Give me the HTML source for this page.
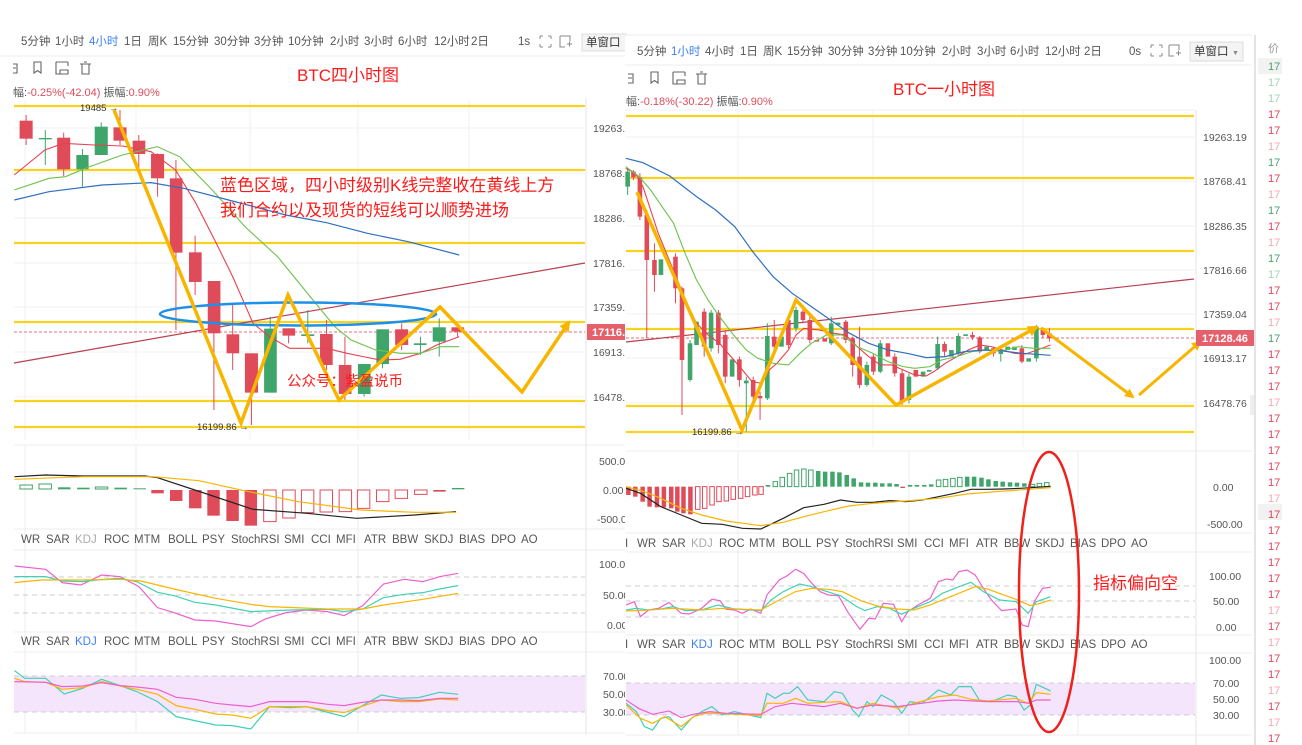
<!DOCTYPE html>
<html><head><meta charset="utf-8"><style>
html,body{margin:0;padding:0;background:#fff;width:1302px;height:745px;overflow:hidden}
svg{display:block;font-family:"Liberation Sans","Noto Sans CJK SC",sans-serif}
.t{font-size:11.5px;fill:#333}
.ax{font-size:10.5px;fill:#555}
.tab{font-size:11.5px;fill:#555}
.ns{vector-effect:non-scaling-stroke;fill:none}
</style></head><body>
<svg width="1302" height="745" viewBox="0 0 1302 745">
<defs>
<marker id="ah" viewBox="0 0 10 10" refX="8" refY="5" markerWidth="3.2" markerHeight="3.2" orient="auto"><path d="M0,0L10,5L0,10z" fill="#f8b500"/></marker>
</defs>
<rect width="1302" height="745" fill="#fff"/>

<!-- ============ LEFT PANEL ============ -->
<g class="tab">
<text x="21" y="45">5分钟</text><text x="55" y="45">1小时</text><text x="89" y="45" fill="#3b82f6">4小时</text><text x="124" y="45">1日</text><text x="148" y="45">周K</text><text x="173" y="45">15分钟</text><text x="214" y="45">30分钟</text><text x="254" y="45">3分钟</text><text x="288" y="45">10分钟</text><text x="330" y="45">2小时</text><text x="364" y="45">3小时</text><text x="398" y="45">6小时</text><text x="434" y="45">12小时</text><text x="471" y="45">2日</text><text x="518" y="45">1s</text>
</g>
<g stroke="#888" fill="none" stroke-width="1"><path d="M540 36h3M540 36v3M551 36h-3M551 36v3M540 47h3M540 47v-3M551 47h-3M551 47v-3"/><path d="M560 36h10v5M560 36v11h5M567 44h5M569.5 41.5v5"/></g>
<rect x="582" y="34" width="44" height="17" fill="#f4f4f4" stroke="#ddd"/><text x="586" y="46" class="t" font-size="11">单窗口</text>
<line x1="0" y1="56" x2="625" y2="56" stroke="#eee"/>
<g stroke="#666" fill="none" stroke-width="1.1"><path d="M13 64h4v9h-4M13 68h3"/><path d="M34 62h7v11l-3.5-2.5L34 73z"/><path d="M56 62h12M56 62v12h5M68 62v4M60 70h8v4h-8z"/><path d="M80 64h11M82 64v10h7V64M84 62h3"/></g>
<text x="297" y="81" font-size="17" fill="#ff1a1a">BTC四小时图</text>
<text x="13" y="96" font-size="11" fill="#e04b5a"><tspan fill="#555">幅:</tspan>-0.25%(-42.04) <tspan fill="#555">振幅:</tspan>0.90%</text>
<g stroke="#f0f0f0"><line x1="25" y1="100" x2="25" y2="440"/><line x1="136" y1="100" x2="136" y2="440"/><line x1="250" y1="100" x2="250" y2="440"/><line x1="358" y1="100" x2="358" y2="440"/><line x1="469" y1="100" x2="469" y2="440"/>
<line x1="14" y1="128" x2="585" y2="128"/><line x1="14" y1="173" x2="585" y2="173"/><line x1="14" y1="218" x2="585" y2="218"/><line x1="14" y1="263" x2="585" y2="263"/><line x1="14" y1="307" x2="585" y2="307"/><line x1="14" y1="352" x2="585" y2="352"/><line x1="14" y1="397" x2="585" y2="397"/></g>
<line x1="586" y1="98" x2="586" y2="735" stroke="#e6e6e6"/>
<g stroke="#f7d320" stroke-width="2.2"><line x1="14" y1="106" x2="585" y2="106"/><line x1="14" y1="170" x2="585" y2="170"/><line x1="14" y1="243" x2="585" y2="243"/><line x1="14" y1="322" x2="585" y2="322"/><line x1="14" y1="401" x2="585" y2="401"/><line x1="14" y1="427" x2="585" y2="427"/></g>
<line x1="14" y1="332" x2="585" y2="332" stroke="#e8707a" stroke-dasharray="3,2"/>
<line x1="14" y1="363" x2="585" y2="263" stroke="#b8424f" stroke-width="1.2"/>
<g transform="translate(0,90) scale(0.4082,0.3333)">
<g stroke-width="1" class="ns">
<g stroke="#e04b5a"><line x1="64" y1="75" x2="64" y2="165" class="ns"/><line x1="156" y1="128" x2="156" y2="258" class="ns"/><line x1="294" y1="60" x2="294" y2="165" class="ns"/><line x1="340" y1="135" x2="340" y2="235" class="ns"/><line x1="386" y1="190" x2="386" y2="320" class="ns"/><line x1="431" y1="210" x2="431" y2="720" class="ns"/><line x1="478" y1="437" x2="478" y2="615" class="ns"/><line x1="524" y1="573" x2="524" y2="960" class="ns"/><line x1="570" y1="640" x2="570" y2="840" class="ns"/><line x1="616" y1="790" x2="616" y2="1005" class="ns"/><line x1="707" y1="715" x2="707" y2="760" class="ns"/><line x1="800" y1="690" x2="800" y2="840" class="ns"/><line x1="845" y1="740" x2="845" y2="930" class="ns"/><line x1="984" y1="700" x2="984" y2="780" class="ns"/><line x1="1121" y1="712" x2="1121" y2="740" class="ns"/></g>
<g stroke="#3fa56b"><line x1="111" y1="120" x2="111" y2="225" class="ns"/><line x1="202" y1="177" x2="202" y2="290" class="ns"/><line x1="248" y1="97" x2="248" y2="195" class="ns"/><line x1="662" y1="680" x2="662" y2="908" class="ns"/><line x1="754" y1="660" x2="754" y2="760" class="ns"/><line x1="892" y1="822" x2="892" y2="920" class="ns"/><line x1="937" y1="718" x2="937" y2="835" class="ns"/><line x1="1030" y1="740" x2="1030" y2="795" class="ns"/><line x1="1076" y1="685" x2="1076" y2="800" class="ns"/></g>
</g>
<g fill="#e04b5a"><rect x="48" y="92" width="32" height="54"/><rect x="140" y="143" width="32" height="95"/><rect x="278" y="112" width="32" height="40"/><rect x="325" y="152" width="31" height="40"/><rect x="370" y="192" width="32" height="73"/><rect x="416" y="265" width="31" height="223"/><rect x="463" y="487" width="31" height="89"/><rect x="509" y="573" width="31" height="157"/><rect x="555" y="733" width="31" height="57"/><rect x="600" y="790" width="32" height="118"/><rect x="692" y="715" width="31" height="22"/><rect x="784" y="732" width="31" height="93"/><rect x="830" y="825" width="31" height="87"/><rect x="968" y="718" width="32" height="47"/><rect x="1106" y="712" width="31" height="13"/></g>
<g fill="#3fa56b"><rect x="95" y="144" width="32" height="4"/><rect x="187" y="195" width="30" height="43"/><rect x="232" y="110" width="32" height="85"/><rect x="647" y="716" width="31" height="192"/><rect x="738" y="733" width="32" height="5"/><rect x="877" y="822" width="31" height="90"/><rect x="922" y="718" width="31" height="104"/><rect x="1014" y="760" width="31" height="5"/><rect x="1060" y="712" width="32" height="43"/></g>
<polyline class="ns" stroke="#e8404e" stroke-width="1.1" points="35,255 110,180 155,160 230,165 300,168 370,185 430,240 480,340 530,460 570,560 620,700 660,740 710,775 760,775 800,775 850,790 890,800 930,810 980,808 1030,790 1070,765 1125,740"/>
<polyline class="ns" stroke="#6cc24a" stroke-width="1.1" points="35,300 120,265 160,260 220,230 300,195 385,170 440,200 520,300 600,410 680,500 760,620 820,710 860,750 920,780 980,790 1030,790 1080,770 1125,770"/>
<polyline class="ns" stroke="#2f6fc0" stroke-width="1.2" points="35,330 120,305 250,285 370,278 450,295 560,330 700,375 800,398 900,430 1000,455 1125,495"/>
</g>
<text x="80" y="111" font-size="9.5" fill="#333">19485 →</text>
<text x="197" y="430" font-size="9.5" fill="#333">16199.86 →</text>
<ellipse cx="298" cy="314" rx="138" ry="11.5" fill="none" stroke="#1e90e8" stroke-width="2.5"/>
<polyline points="114,110 241,423 288,295 339,400 440,307 522,392 569,322" fill="none" stroke="#f8b500" stroke-width="3.5" stroke-linejoin="miter" marker-end="url(#ah)"/>
<text x="220" y="191" font-size="17" fill="#ff1a1a">蓝色区域，四小时级别K线完整收在黄线上方</text>
<text x="220" y="216" font-size="17" fill="#ff1a1a">我们合约以及现货的短线可以顺势进场</text>
<text x="287" y="386" font-size="14.5" fill="#ff1a1a">公众号：紫盈说币</text>
<g class="ax"><text x="593" y="132">19263.1</text><text x="593" y="177">18768.4</text><text x="593" y="222">18286.3</text><text x="593" y="267">17816.6</text><text x="593" y="311">17359.0</text><text x="593" y="356">16913.1</text><text x="593" y="401">16478.7</text></g>
<rect x="587" y="324" width="38" height="16" fill="#e5606b"/><text x="592" y="336" font-size="11" fill="#fff" font-weight="bold">17116.0</text>

<g stroke="#ececec"><line x1="14" y1="445" x2="625" y2="445"/><line x1="14" y1="529" x2="625" y2="529"/><line x1="14" y1="550" x2="625" y2="550"/><line x1="14" y1="632" x2="625" y2="632"/><line x1="14" y1="652" x2="625" y2="652"/><line x1="14" y1="733" x2="625" y2="733"/><line x1="136" y1="445" x2="136" y2="733"/><line x1="358" y1="445" x2="358" y2="733"/><line x1="25" y1="445" x2="25" y2="733"/></g>
<rect x="14" y="676" width="571" height="36" fill="#f4e5fd"/>
<g stroke="#ccc" stroke-dasharray="5,4"><line x1="14" y1="577" x2="585" y2="577"/><line x1="14" y1="595" x2="585" y2="595"/><line x1="14" y1="613" x2="585" y2="613"/><line x1="14" y1="676" x2="585" y2="676"/><line x1="14" y1="712" x2="585" y2="712"/></g>
<g transform="translate(0,440) scale(0.4146,0.3333)">
<g fill="none" stroke="#3fa56b"><rect x="48" y="135" width="30" height="12" class="ns"/><rect x="94" y="132" width="30" height="15" class="ns"/><rect x="230" y="141" width="30" height="6" class="ns"/></g>
<g fill="#3fa56b"><rect x="140" y="142" width="30" height="6"/><rect x="186" y="143" width="30" height="5"/><rect x="276" y="143" width="30" height="5"/><rect x="322" y="145" width="30" height="3"/><rect x="1090" y="144" width="30" height="4"/></g>
<g fill="#e04b5a"><rect x="365" y="150" width="30" height="10"/><rect x="410" y="150" width="30" height="33"/><rect x="456" y="150" width="30" height="55"/><rect x="500" y="150" width="30" height="77"/><rect x="546" y="150" width="30" height="93"/><rect x="590" y="150" width="30" height="107"/><rect x="1045" y="150" width="30" height="5"/></g>
<g fill="none" stroke="#e04b5a"><rect x="636" y="150" width="30" height="95" class="ns"/><rect x="682" y="150" width="30" height="84" class="ns"/><rect x="727" y="150" width="30" height="68" class="ns"/><rect x="772" y="150" width="30" height="66" class="ns"/><rect x="818" y="150" width="30" height="65" class="ns"/><rect x="862" y="150" width="30" height="55" class="ns"/><rect x="908" y="150" width="30" height="35" class="ns"/><rect x="953" y="150" width="30" height="25" class="ns"/><rect x="1000" y="150" width="30" height="13" class="ns"/></g>
<polyline class="ns" stroke="#222" stroke-width="1.2" points="35,110 110,105 200,108 350,108 380,113 470,150 610,208 740,220 860,235 1000,225 1100,215"/>
<polyline class="ns" stroke="#f8b500" stroke-width="1.2" points="35,118 200,110 370,110 480,122 600,155 720,185 870,210 1000,217 1100,217"/>
<polyline class="ns" stroke="#ee5fcf" stroke-width="1.2" points="35,378 110,388 150,428 195,435 245,405 290,410 335,440 380,503 420,518 470,540 520,543 605,560 640,537 690,518 740,510 790,515 830,527 875,497 925,432 975,418 1020,425 1060,410 1105,400"/>
<polyline class="ns" stroke="#3fd1b5" stroke-width="1.2" points="35,410 110,410 150,423 200,425 250,418 290,415 330,425 380,457 420,467 470,487 520,495 605,515 700,510 790,508 830,515 875,507 925,473 975,463 1020,458 1060,447 1105,437"/>
<polyline class="ns" stroke="#f8b500" stroke-width="1.2" points="35,428 100,420 200,420 290,418 340,423 380,435 430,450 520,475 605,493 650,500 790,507 875,507 925,495 1020,478 1105,460"/>
<polyline class="ns" stroke="#3fd1b5" stroke-width="1.2" points="35,692 60,715 110,715 155,762 200,745 245,718 290,737 330,755 380,785 425,830 470,842 520,855 560,857 605,867 650,800 700,803 740,800 790,817 830,830 870,800 920,765 965,775 1010,773 1060,757 1105,763"/>
<polyline class="ns" stroke="#f8b500" stroke-width="1.2" points="35,715 60,725 110,727 150,748 200,743 245,725 290,738 330,748 380,763 425,797 470,808 520,822 560,825 605,835 650,800 700,800 740,800 790,812 830,818 870,800 920,780 965,785 1010,785 1060,777 1105,780"/>
<polyline class="ns" stroke="#ee5fcf" stroke-width="1.2" points="35,725 110,727 150,740 200,738 245,728 290,737 330,741 380,748 425,772 470,778 520,790 560,795 605,800 650,785 700,785 740,785 790,793 830,797 870,788 920,780 965,780 1010,782 1060,775 1105,775"/>
</g>
<g class="tab"><text x="21" y="543">WR</text><text x="46" y="543">SAR</text><text x="75" y="543" fill="#aaa">KDJ</text><text x="104" y="543">ROC</text><text x="134" y="543">MTM</text><text x="168" y="543">BOLL</text><text x="202" y="543">PSY</text><text x="231" y="543">StochRSI</text><text x="284" y="543">SMI</text><text x="311" y="543">CCI</text><text x="336" y="543">MFI</text><text x="364" y="543">ATR</text><text x="392" y="543">BBW</text><text x="424" y="543">SKDJ</text><text x="459" y="543">BIAS</text><text x="491" y="543">DPO</text><text x="521" y="543">AO</text></g>
<g class="tab"><text x="21" y="645">WR</text><text x="46" y="645">SAR</text><text x="75" y="645" fill="#3b82f6">KDJ</text><text x="104" y="645">ROC</text><text x="134" y="645">MTM</text><text x="168" y="645">BOLL</text><text x="202" y="645">PSY</text><text x="231" y="645">StochRSI</text><text x="284" y="645">SMI</text><text x="311" y="645">CCI</text><text x="336" y="645">MFI</text><text x="364" y="645">ATR</text><text x="392" y="645">BBW</text><text x="424" y="645">SKDJ</text><text x="459" y="645">BIAS</text><text x="491" y="645">DPO</text><text x="521" y="645">AO</text></g>
<g class="ax"><text x="599" y="465">500.00</text><text x="603" y="494">0.00</text><text x="597" y="523">-500.0</text><text x="599" y="568">100.00</text><text x="603" y="599">50.00</text><text x="607" y="629">0.00</text><text x="603" y="680">70.00</text><text x="603" y="698">50.00</text><text x="603" y="716">30.00</text></g>

<!-- ============ RIGHT PANEL ============ -->
<rect x="625" y="35" width="677" height="710" fill="#fff"/>
<line x1="625" y1="35" x2="1252" y2="35" stroke="#eee"/>
<g class="tab">
<text x="637" y="55">5分钟</text><text x="671" y="55" fill="#3b82f6">1小时</text><text x="705" y="55">4小时</text><text x="740" y="55">1日</text><text x="763" y="55">周K</text><text x="787" y="55">15分钟</text><text x="828" y="55">30分钟</text><text x="868" y="55">3分钟</text><text x="900" y="55">10分钟</text><text x="942" y="55">2小时</text><text x="977" y="55">3小时</text><text x="1010" y="55">6小时</text><text x="1045" y="55">12小时</text><text x="1084" y="55">2日</text><text x="1129" y="55">0s</text>
</g>
<g stroke="#888" fill="none" stroke-width="1"><path d="M1151 45h3M1151 45v3M1162 45h-3M1162 45v3M1151 56h3M1151 56v-3M1162 56h-3M1162 56v-3"/><path d="M1169 45h10v5M1169 45v11h5M1176 53h5M1178.5 50.5v5"/></g>
<rect x="1190" y="42" width="53" height="19" fill="#f4f4f4" stroke="#ddd"/><text x="1194" y="55" class="t" font-size="11">单窗口</text><text x="1232" y="55" font-size="7" fill="#888">▼</text>
<line x1="625" y1="65" x2="1252" y2="65" stroke="#eee"/>
<g stroke="#666" fill="none" stroke-width="1.1"><path d="M628 74h5v9h-5M628 78h4"/><path d="M651 72h7v11l-3.5-2.5L651 83z"/><path d="M673 72h12M673 72v12h5M685 72v4M677 80h8v4h-8z"/><path d="M696 74h11M698 74v10h7V74M700 72h3"/></g>
<text x="893" y="95" font-size="17" fill="#ff1a1a">BTC一小时图</text>
<text x="626" y="105" font-size="11" fill="#e04b5a"><tspan fill="#555">幅:</tspan>-0.18%(-30.22) <tspan fill="#555">振幅:</tspan>0.90%</text>
<line x1="625" y1="110" x2="1195" y2="110" stroke="#f0f0f0"/>
<g stroke="#f2f2f2"><line x1="738" y1="110" x2="738" y2="447"/><line x1="873" y1="110" x2="873" y2="447"/><line x1="1023" y1="110" x2="1023" y2="447"/>
<line x1="626" y1="137" x2="1195" y2="137"/><line x1="626" y1="181" x2="1195" y2="181"/><line x1="626" y1="226" x2="1195" y2="226"/><line x1="626" y1="270" x2="1195" y2="270"/><line x1="626" y1="314" x2="1195" y2="314"/><line x1="626" y1="358" x2="1195" y2="358"/><line x1="626" y1="403" x2="1195" y2="403"/></g>
<line x1="1196" y1="110" x2="1196" y2="745" stroke="#e6e6e6"/>
<g stroke="#f7d320" stroke-width="2.2"><line x1="626" y1="116" x2="1194" y2="116"/><line x1="626" y1="178" x2="1194" y2="178"/><line x1="626" y1="251" x2="1194" y2="251"/><line x1="626" y1="329" x2="1194" y2="329"/><line x1="626" y1="406" x2="1194" y2="406"/><line x1="626" y1="432" x2="1194" y2="432"/></g>
<line x1="626" y1="338" x2="1196" y2="338" stroke="#e8707a" stroke-dasharray="3,2"/>
<line x1="626" y1="342" x2="1194" y2="279" stroke="#b8424f" stroke-width="1.2"/>
<g transform="translate(620,90) scale(0.3827,0.3333)">
<g class="ns" stroke-width="1">
<g stroke="#e04b5a"><line x1="35" y1="240" x2="35" y2="270" class="ns"/><line x1="52" y1="250" x2="52" y2="390" class="ns"/><line x1="70" y1="360" x2="70" y2="745" class="ns"/><line x1="90" y1="460" x2="90" y2="605" class="ns"/><line x1="145" y1="490" x2="145" y2="640" class="ns"/><line x1="162" y1="590" x2="162" y2="975" class="ns"/><line x1="220" y1="655" x2="220" y2="800" class="ns"/><line x1="257" y1="660" x2="257" y2="790" class="ns"/><line x1="275" y1="720" x2="275" y2="880" class="ns"/><line x1="312" y1="800" x2="312" y2="890" class="ns"/><line x1="348" y1="860" x2="348" y2="935" class="ns"/><line x1="366" y1="905" x2="366" y2="990" class="ns"/><line x1="403" y1="690" x2="403" y2="780" class="ns"/><line x1="440" y1="680" x2="440" y2="775" class="ns"/><line x1="478" y1="650" x2="478" y2="700" class="ns"/><line x1="496" y1="680" x2="496" y2="760" class="ns"/><line x1="590" y1="690" x2="590" y2="760" class="ns"/><line x1="608" y1="740" x2="608" y2="860" class="ns"/><line x1="626" y1="710" x2="626" y2="895" class="ns"/><line x1="662" y1="790" x2="662" y2="855" class="ns"/><line x1="718" y1="790" x2="718" y2="860" class="ns"/><line x1="737" y1="840" x2="737" y2="945" class="ns"/><line x1="848" y1="755" x2="848" y2="800" class="ns"/><line x1="921" y1="725" x2="921" y2="750" class="ns"/><line x1="940" y1="738" x2="940" y2="790" class="ns"/><line x1="976" y1="770" x2="976" y2="800" class="ns"/><line x1="1050" y1="765" x2="1050" y2="820" class="ns"/><line x1="1105" y1="712" x2="1105" y2="745" class="ns"/><line x1="1122" y1="715" x2="1122" y2="755" class="ns"/></g>
<g stroke="#3fa56b"><line x1="20" y1="235" x2="20" y2="315" class="ns"/><line x1="183" y1="750" x2="183" y2="875" class="ns"/><line x1="238" y1="660" x2="238" y2="785" class="ns"/><line x1="330" y1="860" x2="330" y2="1025" class="ns"/><line x1="385" y1="700" x2="385" y2="930" class="ns"/><line x1="460" y1="650" x2="460" y2="725" class="ns"/><line x1="552" y1="680" x2="552" y2="765" class="ns"/><line x1="645" y1="815" x2="645" y2="890" class="ns"/><line x1="680" y1="750" x2="680" y2="850" class="ns"/><line x1="755" y1="850" x2="755" y2="940" class="ns"/><line x1="830" y1="740" x2="830" y2="840" class="ns"/><line x1="884" y1="730" x2="884" y2="795" class="ns"/><line x1="995" y1="775" x2="995" y2="815" class="ns"/><line x1="1088" y1="705" x2="1088" y2="815" class="ns"/></g>
</g>
<g fill="#e04b5a"><rect x="29" y="245" width="12" height="17"/><rect x="46" y="262" width="12" height="118"/><rect x="64" y="375" width="12" height="135"/><rect x="84" y="510" width="12" height="45"/><rect x="139" y="500" width="12" height="95"/><rect x="156" y="595" width="12" height="215"/><rect x="214" y="665" width="12" height="105"/><rect x="251" y="668" width="12" height="97"/><rect x="269" y="735" width="12" height="125"/><rect x="306" y="808" width="12" height="62"/><rect x="342" y="870" width="12" height="50"/><rect x="360" y="918" width="12" height="7"/><rect x="397" y="740" width="12" height="30"/><rect x="434" y="690" width="12" height="75"/><rect x="472" y="665" width="12" height="25"/><rect x="490" y="690" width="12" height="60"/><rect x="508" y="750" width="12" height="5"/><rect x="529" y="745" width="12" height="10"/><rect x="584" y="695" width="12" height="55"/><rect x="602" y="745" width="12" height="80"/><rect x="620" y="800" width="12" height="85"/><rect x="656" y="800" width="12" height="45"/><rect x="694" y="760" width="12" height="40"/><rect x="712" y="800" width="12" height="50"/><rect x="731" y="850" width="12" height="85"/><rect x="767" y="840" width="12" height="20"/><rect x="842" y="762" width="12" height="23"/><rect x="915" y="735" width="12" height="7"/><rect x="934" y="742" width="12" height="43"/><rect x="970" y="775" width="12" height="15"/><rect x="1044" y="775" width="12" height="40"/><rect x="1099" y="720" width="12" height="15"/><rect x="1116" y="730" width="12" height="15"/></g>
<g fill="#3fa56b"><rect x="14" y="245" width="12" height="45"/><rect x="101" y="508" width="12" height="47"/><rect x="177" y="760" width="12" height="110"/><rect x="194" y="695" width="12" height="70"/><rect x="232" y="668" width="12" height="107"/><rect x="287" y="808" width="12" height="52"/><rect x="324" y="872" width="12" height="8"/><rect x="379" y="738" width="12" height="187"/><rect x="416" y="740" width="12" height="30"/><rect x="454" y="660" width="12" height="55"/><rect x="546" y="700" width="12" height="60"/><rect x="564" y="698" width="12" height="7"/><rect x="639" y="825" width="12" height="60"/><rect x="674" y="760" width="12" height="85"/><rect x="749" y="860" width="12" height="70"/><rect x="786" y="845" width="12" height="15"/><rect x="802" y="840" width="12" height="5"/><rect x="824" y="762" width="12" height="73"/><rect x="860" y="780" width="12" height="20"/><rect x="878" y="738" width="12" height="52"/><rect x="897" y="733" width="12" height="5"/><rect x="952" y="770" width="12" height="10"/><rect x="989" y="785" width="12" height="7"/><rect x="1007" y="770" width="12" height="10"/><rect x="1025" y="770" width="12" height="10"/><rect x="1062" y="805" width="12" height="10"/><rect x="1082" y="712" width="12" height="93"/></g>
<polyline class="ns" stroke="#e8404e" stroke-width="1.1" points="15,235 40,250 60,290 80,360 100,430 125,500 150,570 175,640 200,700 230,735 260,760 290,800 320,840 345,875 370,880 390,840 410,820 440,780 460,735 480,715 520,720 560,730 590,735 620,770 650,800 680,825 710,825 740,840 770,855 800,858 820,845 850,820 880,800 910,780 940,765 970,770 1000,780 1030,790 1060,792 1090,780 1125,765"/>
<polyline class="ns" stroke="#6cc24a" stroke-width="1.1" points="15,230 50,260 80,300 110,350 140,400 170,490 200,570 230,630 260,680 300,740 330,780 360,805 400,820 440,825 470,790 500,760 540,735 580,735 620,770 660,790 700,815 740,830 770,835 810,830 840,810 880,800 920,785 960,780 1000,782 1040,770 1080,775 1125,775"/>
<polyline class="ns" stroke="#2f6fc0" stroke-width="1.2" points="15,205 60,218 130,258 200,320 250,360 300,410 350,490 400,560 450,610 500,650 550,690 600,730 650,760 700,780 750,790 800,803 850,800 900,785 950,780 1000,783 1050,790 1125,796"/>
</g>
<text x="692" y="435" font-size="9.5" fill="#333">16199.86 →</text>
<polyline points="637,192 742,430 796,300 896,405 1037,327" fill="none" stroke="#f8b500" stroke-width="3.5" marker-end="url(#ah)"/>
<polyline points="1041,328 1133,397" fill="none" stroke="#f8b500" stroke-width="3" marker-end="url(#ah)"/>
<polyline points="1139,395 1200,342" fill="none" stroke="#f8b500" stroke-width="3" marker-end="url(#ah)"/>
<g class="ax"><text x="1203" y="141">19263.19</text><text x="1203" y="185">18768.41</text><text x="1203" y="230">18286.35</text><text x="1203" y="274">17816.66</text><text x="1203" y="318">17359.04</text><text x="1203" y="362">16913.17</text><text x="1203" y="407">16478.76</text></g>
<rect x="1196" y="330" width="59" height="16" fill="#e5606b"/><text x="1202" y="342" font-size="11" fill="#fff" font-weight="bold">17128.46</text>
<rect x="1250" y="395" width="5" height="20" fill="#eee"/>

<g stroke="#ececec"><line x1="626" y1="451" x2="1252" y2="451"/><line x1="626" y1="533" x2="1252" y2="533"/><line x1="626" y1="552" x2="1252" y2="552"/><line x1="626" y1="635" x2="1252" y2="635"/><line x1="626" y1="653" x2="1252" y2="653"/><line x1="626" y1="735" x2="1252" y2="735"/><line x1="738" y1="451" x2="738" y2="735"/><line x1="909" y1="451" x2="909" y2="735"/><line x1="1078" y1="451" x2="1078" y2="735"/></g>
<rect x="626" y="683" width="569" height="32" fill="#f4e5fd"/>
<g stroke="#ccc" stroke-dasharray="5,4"><line x1="626" y1="586" x2="1195" y2="586"/><line x1="626" y1="601" x2="1195" y2="601"/><line x1="626" y1="617" x2="1195" y2="617"/><line x1="626" y1="683" x2="1195" y2="683"/><line x1="626" y1="715" x2="1195" y2="715"/></g>
<g transform="translate(620,445) scale(0.4082,0.3333)">
<g fill="#e04b5a"><rect x="15" y="125" width="11" height="25"/><rect x="32" y="125" width="11" height="30"/><rect x="50" y="125" width="11" height="45"/><rect x="67" y="125" width="11" height="60"/><rect x="85" y="125" width="11" height="62"/><rect x="102" y="125" width="11" height="62"/><rect x="120" y="125" width="11" height="65"/><rect x="135" y="125" width="11" height="75"/><rect x="150" y="125" width="11" height="80"/><rect x="167" y="125" width="11" height="83"/><rect x="687" y="125" width="11" height="4"/></g>
<g fill="none" stroke="#e04b5a"><rect x="185" y="125" width="11" height="68" class="ns"/><rect x="202" y="125" width="11" height="65" class="ns"/><rect x="220" y="125" width="11" height="55" class="ns"/><rect x="237" y="125" width="11" height="45" class="ns"/><rect x="255" y="125" width="11" height="43" class="ns"/><rect x="272" y="125" width="11" height="38" class="ns"/><rect x="290" y="125" width="11" height="35" class="ns"/><rect x="307" y="125" width="11" height="30" class="ns"/><rect x="325" y="125" width="11" height="25" class="ns"/><rect x="340" y="125" width="11" height="23" class="ns"/></g>
<g fill="none" stroke="#3fa56b"><rect x="375" y="110" width="11" height="15" class="ns"/><rect x="392" y="97" width="11" height="28" class="ns"/><rect x="410" y="85" width="11" height="40" class="ns"/><rect x="427" y="75" width="11" height="50" class="ns"/><rect x="445" y="72" width="11" height="53" class="ns"/><rect x="462" y="75" width="11" height="50" class="ns"/><rect x="775" y="105" width="11" height="20" class="ns"/><rect x="792" y="103" width="11" height="22" class="ns"/><rect x="810" y="100" width="11" height="25" class="ns"/><rect x="827" y="97" width="11" height="28" class="ns"/><rect x="1005" y="118" width="11" height="7" class="ns"/><rect x="1022" y="115" width="11" height="10" class="ns"/><rect x="1040" y="113" width="11" height="12" class="ns"/></g>
<g fill="#3fa56b"><rect x="357" y="120" width="11" height="5"/><rect x="480" y="78" width="11" height="47"/><rect x="497" y="80" width="11" height="45"/><rect x="515" y="80" width="11" height="45"/><rect x="532" y="82" width="11" height="43"/><rect x="550" y="90" width="11" height="35"/><rect x="567" y="100" width="11" height="25"/><rect x="585" y="112" width="11" height="13"/><rect x="602" y="113" width="11" height="12"/><rect x="620" y="113" width="11" height="12"/><rect x="637" y="115" width="11" height="10"/><rect x="655" y="115" width="11" height="10"/><rect x="672" y="117" width="11" height="8"/><rect x="705" y="120" width="11" height="5"/><rect x="722" y="120" width="11" height="5"/><rect x="740" y="120" width="11" height="5"/><rect x="757" y="118" width="11" height="7"/><rect x="845" y="95" width="11" height="30"/><rect x="862" y="95" width="11" height="30"/><rect x="880" y="98" width="11" height="27"/><rect x="897" y="103" width="11" height="22"/><rect x="915" y="108" width="11" height="17"/><rect x="932" y="110" width="11" height="15"/><rect x="950" y="112" width="11" height="13"/><rect x="967" y="113" width="11" height="12"/><rect x="985" y="115" width="11" height="10"/></g>
<polyline class="ns" stroke="#222" stroke-width="1.2" points="15,130 50,145 100,185 150,210 200,235 250,238 300,250 345,252 400,220 450,188 500,178 540,165 580,172 620,172 660,167 700,170 740,165 780,155 820,145 860,133 900,133 940,132 980,130 1020,127 1055,124"/>
<polyline class="ns" stroke="#f8b500" stroke-width="1.2" points="15,125 60,140 100,160 150,190 200,210 260,228 345,242 400,232 450,215 500,200 560,183 620,175 700,168 780,160 850,147 920,140 1000,133 1055,128"/>
<polyline class="ns" stroke="#ee5fcf" stroke-width="1.2" points="15,480 35,470 50,515 70,495 95,490 120,472 150,505 170,507 200,490 225,463 245,467 260,493 280,495 300,505 320,492 345,505 360,450 390,405 410,392 430,373 450,385 470,415 490,440 510,450 535,452 560,505 588,553 610,520 625,522 645,475 670,478 690,530 705,500 730,480 760,460 780,410 800,402 815,405 830,380 850,375 870,390 890,430 910,465 935,497 970,492 985,540 1000,545 1015,470 1035,430 1055,427"/>
<polyline class="ns" stroke="#3fd1b5" stroke-width="1.2" points="15,495 40,490 70,495 100,492 130,485 160,497 200,495 240,480 280,492 345,497 370,465 400,440 440,417 470,425 500,437 540,452 580,485 600,497 630,485 660,490 690,508 720,490 760,470 790,445 830,425 860,412 890,440 930,465 970,470 1000,505 1020,470 1055,455"/>
<polyline class="ns" stroke="#f8b500" stroke-width="1.2" points="15,498 60,496 130,490 200,495 250,490 345,495 390,465 430,440 470,430 510,433 545,440 590,467 630,483 680,492 720,495 760,480 800,460 840,440 870,425 900,432 940,450 970,463 1005,482 1030,475 1055,465"/>
<polyline class="ns" stroke="#3fd1b5" stroke-width="1.2" points="15,775 40,800 60,845 80,855 100,820 120,815 150,855 175,820 200,800 225,785 250,810 280,800 345,818 360,745 380,760 400,745 415,745 435,725 460,765 500,770 525,740 545,745 570,795 585,815 605,770 620,785 640,750 670,770 690,805 710,770 740,775 780,735 810,750 830,725 860,725 880,765 910,770 950,750 970,755 990,795 1005,780 1020,718 1055,738"/>
<polyline class="ns" stroke="#f8b500" stroke-width="1.2" points="15,780 50,820 80,835 110,815 150,845 180,815 210,805 240,805 345,812 360,775 400,775 430,760 460,775 500,772 540,770 580,790 620,775 680,790 720,775 780,755 820,750 860,763 900,768 970,760 1000,775 1020,743 1055,748"/>
<polyline class="ns" stroke="#ee5fcf" stroke-width="1.2" points="15,765 45,790 80,808 120,798 150,818 180,808 220,800 260,805 345,808 380,785 420,775 460,780 500,785 540,775 580,790 620,780 680,785 720,778 780,768 820,765 900,770 970,770 1000,775 1020,765 1055,765"/>
</g>
<g class="tab"><text x="625" y="547">I</text><text x="637" y="547">WR</text><text x="662" y="547">SAR</text><text x="691" y="547" fill="#aaa">KDJ</text><text x="719" y="547">ROC</text><text x="749" y="547">MTM</text><text x="782" y="547">BOLL</text><text x="816" y="547">PSY</text><text x="845" y="547">StochRSI</text><text x="897" y="547">SMI</text><text x="924" y="547">CCI</text><text x="949" y="547">MFI</text><text x="976" y="547">ATR</text><text x="1004" y="547">BBW</text><text x="1035" y="547">SKDJ</text><text x="1070" y="547">BIAS</text><text x="1101" y="547">DPO</text><text x="1131" y="547">AO</text></g>
<g class="tab"><text x="625" y="648">I</text><text x="637" y="648">WR</text><text x="662" y="648">SAR</text><text x="691" y="648" fill="#3b82f6">KDJ</text><text x="719" y="648">ROC</text><text x="749" y="648">MTM</text><text x="782" y="648">BOLL</text><text x="816" y="648">PSY</text><text x="845" y="648">StochRSI</text><text x="897" y="648">SMI</text><text x="924" y="648">CCI</text><text x="949" y="648">MFI</text><text x="976" y="648">ATR</text><text x="1004" y="648">BBW</text><text x="1035" y="648">SKDJ</text><text x="1070" y="648">BIAS</text><text x="1101" y="648">DPO</text><text x="1131" y="648">AO</text></g>
<g class="ax"><text x="1213" y="491">0.00</text><text x="1207" y="528">-500.00</text><text x="1209" y="580">100.00</text><text x="1213" y="605">50.00</text><text x="1216" y="631">0.00</text><text x="1209" y="664">100.00</text><text x="1213" y="687">70.00</text><text x="1213" y="703">50.00</text><text x="1213" y="719">30.00</text></g>
<ellipse cx="1049" cy="592" rx="30" ry="140" fill="none" stroke="#f0201a" stroke-width="2.5"/>
<text x="1093" y="589" font-size="17" fill="#ff1a1a">指标偏向空</text>

<line x1="1255" y1="35" x2="1255" y2="745" stroke="#e4e4e4" stroke-width="2"/>
<rect x="1258" y="58" width="44" height="16" fill="#f2f2f2"/><rect x="1258" y="504" width="44" height="16" fill="#f2f2f2"/>
<g font-size="11">
<text x="1268" y="52" fill="#999">价</text>
<text x="1268" y="70" fill="#46a36b">17</text><text x="1268" y="86" fill="#9dd3b2">17</text><text x="1268" y="102" fill="#9dd3b2">17</text><text x="1268" y="118" fill="#e04050">17</text><text x="1268" y="134" fill="#e04050">17</text><text x="1268" y="150" fill="#f2a8b0">17</text><text x="1268" y="166" fill="#46a36b">17</text><text x="1268" y="182" fill="#e04050">17</text><text x="1268" y="198" fill="#f2a8b0">17</text><text x="1268" y="214" fill="#46a36b">17</text><text x="1268" y="230" fill="#e04050">17</text><text x="1268" y="246" fill="#f2a8b0">17</text><text x="1268" y="262" fill="#46a36b">17</text><text x="1268" y="278" fill="#9dd3b2">17</text><text x="1268" y="294" fill="#e04050">17</text><text x="1268" y="310" fill="#e04050">17</text><text x="1268" y="326" fill="#f2a8b0">17</text><text x="1268" y="342" fill="#46a36b">17</text><text x="1268" y="358" fill="#e04050">17</text><text x="1268" y="374" fill="#e04050">17</text><text x="1268" y="390" fill="#e04050">17</text><text x="1268" y="406" fill="#f2a8b0">17</text><text x="1268" y="422" fill="#e04050">17</text><text x="1268" y="438" fill="#e04050">17</text><text x="1268" y="454" fill="#e04050">17</text><text x="1268" y="470" fill="#e04050">17</text><text x="1268" y="486" fill="#e04050">17</text><text x="1268" y="502" fill="#f2a8b0">17</text><text x="1268" y="518" fill="#e04050">17</text><text x="1268" y="534" fill="#e04050">17</text><text x="1268" y="550" fill="#e04050">17</text><text x="1268" y="566" fill="#e04050">17</text><text x="1268" y="582" fill="#e04050">17</text><text x="1268" y="598" fill="#e04050">17</text><text x="1268" y="614" fill="#f2a8b0">17</text><text x="1268" y="630" fill="#e04050">17</text><text x="1268" y="646" fill="#f2a8b0">17</text><text x="1268" y="662" fill="#e04050">17</text><text x="1268" y="678" fill="#e04050">17</text><text x="1268" y="694" fill="#f2a8b0">17</text><text x="1268" y="710" fill="#e04050">17</text><text x="1268" y="726" fill="#f2a8b0">17</text><text x="1268" y="742" fill="#e04050">17</text>
</g>
<rect x="1282" y="35" width="20" height="710" fill="#fff"/>
</svg>
</body></html>
